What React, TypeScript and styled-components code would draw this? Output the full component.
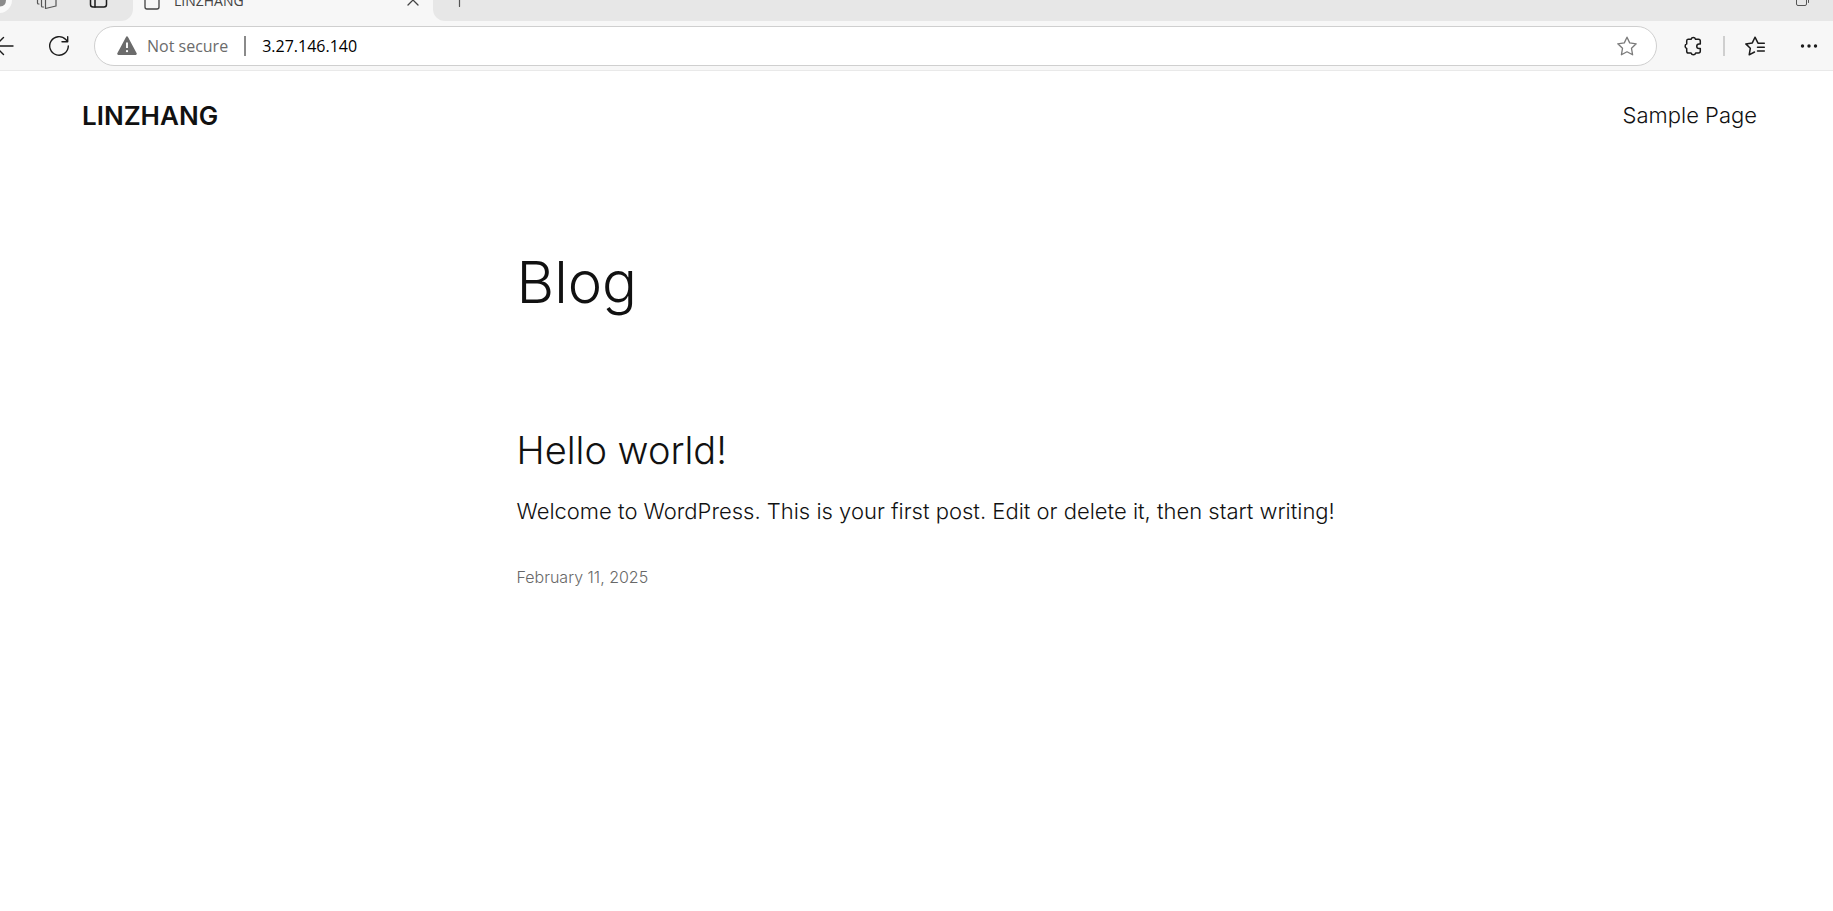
import React from "react";
import styled, { createGlobalStyle } from "styled-components";

const GlobalStyle = createGlobalStyle`
  * { box-sizing: border-box; }
  body { margin: 0; background: #fff; color: #111; font-family: Inter, "Liberation Sans", sans-serif; font-weight: 300; overflow-x: hidden; }
  button { padding: 0; border: 0; background: none; color: inherit; font: inherit; display: flex; }
  a { color: inherit; text-decoration: none; }
  h1, h2, p { margin: 0; }
`;

const Svg = styled.svg`
  display: block;
  flex: none;
  width: 20px;
  height: 20px;
  overflow: visible;
  fill: none;
  stroke: currentColor;
  stroke-width: 1.5;
  stroke-linecap: round;
  stroke-linejoin: round;
`;

const Chrome = styled.div`
  background: #f7f7f7;
  border-bottom: 1px solid #e9e9e9;
  color: #1b1b1b;
  font-family: "Open Sans", "Noto Sans", sans-serif;
  font-weight: 400;
`;
const TabStrip = styled.div`
  display: flex;
  align-items: flex-end;
  height: 21px;
  overflow: hidden;
`;
const StripStart = styled.div`
  display: flex;
  align-items: center;
  gap: 32px;
  width: 133px;
  height: 42px;
  background: #e7e7e7;
  border-bottom-right-radius: 12px;
`;
const Profile = styled.button`
  width: 26px;
  height: 26px;
  margin-left: -14px;
  margin-right: -8px;
  border-radius: 50%;
  background: #fafafa;
  color: #8c8c8c;
  align-items: center;
  justify-content: center;
`;
const Tab = styled.div`
  display: flex;
  align-items: center;
  gap: 12px;
  width: 300px;
  height: 42px;
  padding: 0 10px 0 9px;
  color: #444;
  font-size: 14px;
`;
const TabTitle = styled.span`
  flex: 1;
`;
const StripEnd = styled.div`
  flex: 1;
  display: flex;
  align-items: center;
  justify-content: space-between;
  height: 42px;
  padding: 0 22px 0 16px;
  background: #e7e7e7;
  color: #555;
  border-bottom-left-radius: 12px;
`;
const Toolbar = styled.div`
  display: flex;
  align-items: center;
  padding: 5px 14px 4px 0;
`;
const NavButtons = styled.div`
  display: flex;
  align-items: center;
  gap: 34px;
  width: 94px;
`;
const BackButton = styled.button`
  margin-left: -5px;
`;
const AddressBar = styled.form`
  flex: 1;
  display: flex;
  align-items: center;
  height: 40px;
  padding: 0 19px 0 22px;
  border: 1px solid #cfcfcf;
  border-radius: 20px;
  background: #fff;
  font-size: 16px;
`;
const Security = styled.button`
  align-items: center;
  gap: 10px;
  color: #6b6b6b;
`;
const Divider = styled.span<{ $color: string }>`
  width: 2px;
  height: 20px;
  background: ${(p) => p.$color};
`;
const AddressDivider = styled(Divider)`
  margin: 0 16px;
`;
const Address = styled.input`
  flex: 1;
  min-width: 0;
  padding: 0;
  border: 0;
  outline: 0;
  background: none;
  color: #000;
  font: inherit;
`;
const StarButton = styled.button`
  color: #7a7a7a;
`;
const Tools = styled.div`
  display: flex;
  align-items: center;
  gap: 20px;
  padding-left: 26px;
`;
const MoreButton = styled.button`
  margin-left: 14px;
`;

const SiteHeader = styled.header`
  display: flex;
  align-items: center;
  justify-content: space-between;
  padding: 22px 76px 0 82px;
  line-height: 44px;
`;
const SiteTitle = styled.a`
  font-size: 26px;
  font-weight: 600;
`;
const NavLink = styled.a`
  font-size: 22px;
`;
const Main = styled.main`
  max-width: 864px;
  margin: 0 auto;
  padding: 109px 0 48px 32px;
`;
const PageTitle = styled.h1`
  font-size: 58px;
  font-weight: 350;
  line-height: 68px;
`;
const Post = styled.article`
  padding-top: 111px;
`;
const PostTitle = styled.h2`
  font-size: 38px;
  font-weight: 350;
  line-height: 46px;
`;
const Excerpt = styled.p`
  padding-top: 22px;
  font-size: 22px;
  line-height: 32px;
`;
const PostDate = styled.p`
  padding-top: 38px;
  color: #686868;
  font-size: 16px;
  line-height: 24px;
`;

const WorkspacesIcon = () => (
  <Svg viewBox="0 0 20 20" color="#555">
    <path d="M9.500 3V18.500L20 16V2Z" strokeWidth="1.200" />
    <path d="M5.500 2V16Q5.500 17 6.500 17H7.500" strokeWidth="1.200" />
    <path d="M1.500 2V13Q1.500 14 2.500 14H3" strokeWidth="1.200" />
  </Svg>
);
const VerticalTabsIcon = () => (
  <Svg viewBox="0 0 20 20">
    <rect x="2.500" y="1" width="16" height="16" rx="2.500" />
    <path d="M7 1V17M2.500 5H18.500" />
  </Svg>
);
const ProfileIcon = () => (
  <Svg viewBox="0 0 20 20">
    <path d="M4 10H17Q17 16 11 16.500Q5 16 4 10Z" fill="currentColor" stroke="none" />
  </Svg>
);
const PageIcon = () => (
  <Svg viewBox="0 0 20 20">
    <path d="M4.500 .5H11.500L17 6V17Q17 19 15 19H5Q3 19 3 17V2Q3 .5 4.500 .5Z" strokeWidth="1.300" />
  </Svg>
);
const CloseIcon = () => (
  <Svg viewBox="0 0 20 20">
    <path d="M5 5 15 15M15 5 5 15" strokeWidth="1.300" />
  </Svg>
);
const PlusIcon = () => (
  <Svg viewBox="0 0 20 20">
    <path d="M10.500 2.500V16.500M3.500 9H17.500" strokeWidth="1.200" />
  </Svg>
);
const RestoreIcon = () => (
  <Svg viewBox="0 0 20 20">
    <rect x="5.500" y="5.500" width="10" height="10" rx="1.500" strokeWidth="1" />
    <path d="M8 3H15.500Q17.500 3 17.500 5V12.500" strokeWidth="1" />
  </Svg>
);
const BackIcon = () => (
  <Svg viewBox="0 0 20 20">
    <path d="M18 10H0M8.500 1.500 0 10 8.500 18.500" strokeWidth="1.400" />
  </Svg>
);
const RefreshIcon = () => (
  <Svg viewBox="0 0 20 20">
    <path d="M19.300 10A9.300 9.300 0 1 1 16.800 3.600L18.500 5.500M18.700 .8V5.700H13" strokeWidth="1.400" />
  </Svg>
);
const WarningIcon = () => (
  <Svg viewBox="0 0 20 20">
    <path d="M10 1.500 18.700 17.800H1.300Z" fill="currentColor" strokeWidth="2.200" />
    <path d="M10 6.500V12" stroke="#fff" strokeWidth="1.900" strokeLinecap="butt" />
    <circle cx="10" cy="15.200" r="1.100" fill="#fff" stroke="none" />
  </Svg>
);
const StarIcon = () => (
  <Svg viewBox="0 0 20 20">
    <path d="M10 1.200 12.700 6.900 19.200 7.800 14.500 12.300 15.600 18.800 10 15.800 4.400 18.800 5.500 12.300 .8 7.800 7.300 6.900Z" strokeWidth="1.300" />
  </Svg>
);
const PuzzleIcon = () => (
  <Svg viewBox="0 0 20 20">
    <path d="M5 3.200H8.100A2.300 2.300 0 0 1 12.500 3.200H15.500Q17.300 3.200 17.300 5V7.900H16A2.200 2.200 0 0 0 16 12.400H17.300V15Q17.300 17 15.500 17H12.700A2.400 2.400 0 0 1 8.100 17H5.500Q3.700 17 3.700 15.200V12.400A2.400 2.400 0 0 1 3.700 7.900V5Q3.700 3.200 5 3.200Z" />
  </Svg>
);
const FavoritesIcon = () => (
  <Svg viewBox="0 0 20 20">
    <path d="M19.300 7.200H13L10 1.200 7.300 6.900 .8 7.900 5.300 12.300 4.200 18.800 9.500 16M12.500 11.200H19.300M12.500 15H19.300" />
  </Svg>
);
const MoreIcon = () => (
  <Svg viewBox="0 0 20 20">
    <g fill="currentColor" stroke="none">
      <circle cx="3.500" cy="10" r="1.700" />
      <circle cx="10" cy="10" r="1.700" />
      <circle cx="16.500" cy="10" r="1.700" />
    </g>
  </Svg>
);

export default function App() {
  return (
    <>
      <GlobalStyle />
      <Chrome>
        <TabStrip>
          <StripStart>
            <Profile aria-label="Profile"><ProfileIcon /></Profile>
            <button aria-label="Workspaces"><WorkspacesIcon /></button>
            <button aria-label="Tab actions"><VerticalTabsIcon /></button>
          </StripStart>
          <Tab>
            <PageIcon />
            <TabTitle>LINZHANG</TabTitle>
            <button aria-label="Close tab"><CloseIcon /></button>
          </Tab>
          <StripEnd>
            <button aria-label="New tab"><PlusIcon /></button>
            <button aria-label="Restore window"><RestoreIcon /></button>
          </StripEnd>
        </TabStrip>
        <Toolbar>
          <NavButtons>
            <BackButton aria-label="Back"><BackIcon /></BackButton>
            <button aria-label="Refresh"><RefreshIcon /></button>
          </NavButtons>
          <AddressBar>
            <Security type="button"><WarningIcon />Not secure</Security>
            <AddressDivider $color="#8a8a8a" />
            <Address aria-label="Address" defaultValue="3.27.146.140" />
            <StarButton type="button" aria-label="Add to favorites"><StarIcon /></StarButton>
          </AddressBar>
          <Tools>
            <button aria-label="Extensions"><PuzzleIcon /></button>
            <Divider $color="#cfcfcf" />
            <button aria-label="Favorites"><FavoritesIcon /></button>
            <MoreButton aria-label="Settings and more"><MoreIcon /></MoreButton>
          </Tools>
        </Toolbar>
      </Chrome>
      <SiteHeader>
        <SiteTitle href="#">LINZHANG</SiteTitle>
        <nav><NavLink href="#">Sample Page</NavLink></nav>
      </SiteHeader>
      <Main>
        <PageTitle>Blog</PageTitle>
        <Post>
          <PostTitle><a href="#">Hello world!</a></PostTitle>
          <Excerpt>Welcome to WordPress. This is your first post. Edit or delete it, then start writing!</Excerpt>
          <PostDate><a href="#"><time dateTime="2025-02-11">February 11, 2025</time></a></PostDate>
        </Post>
      </Main>
    </>
  );
}
